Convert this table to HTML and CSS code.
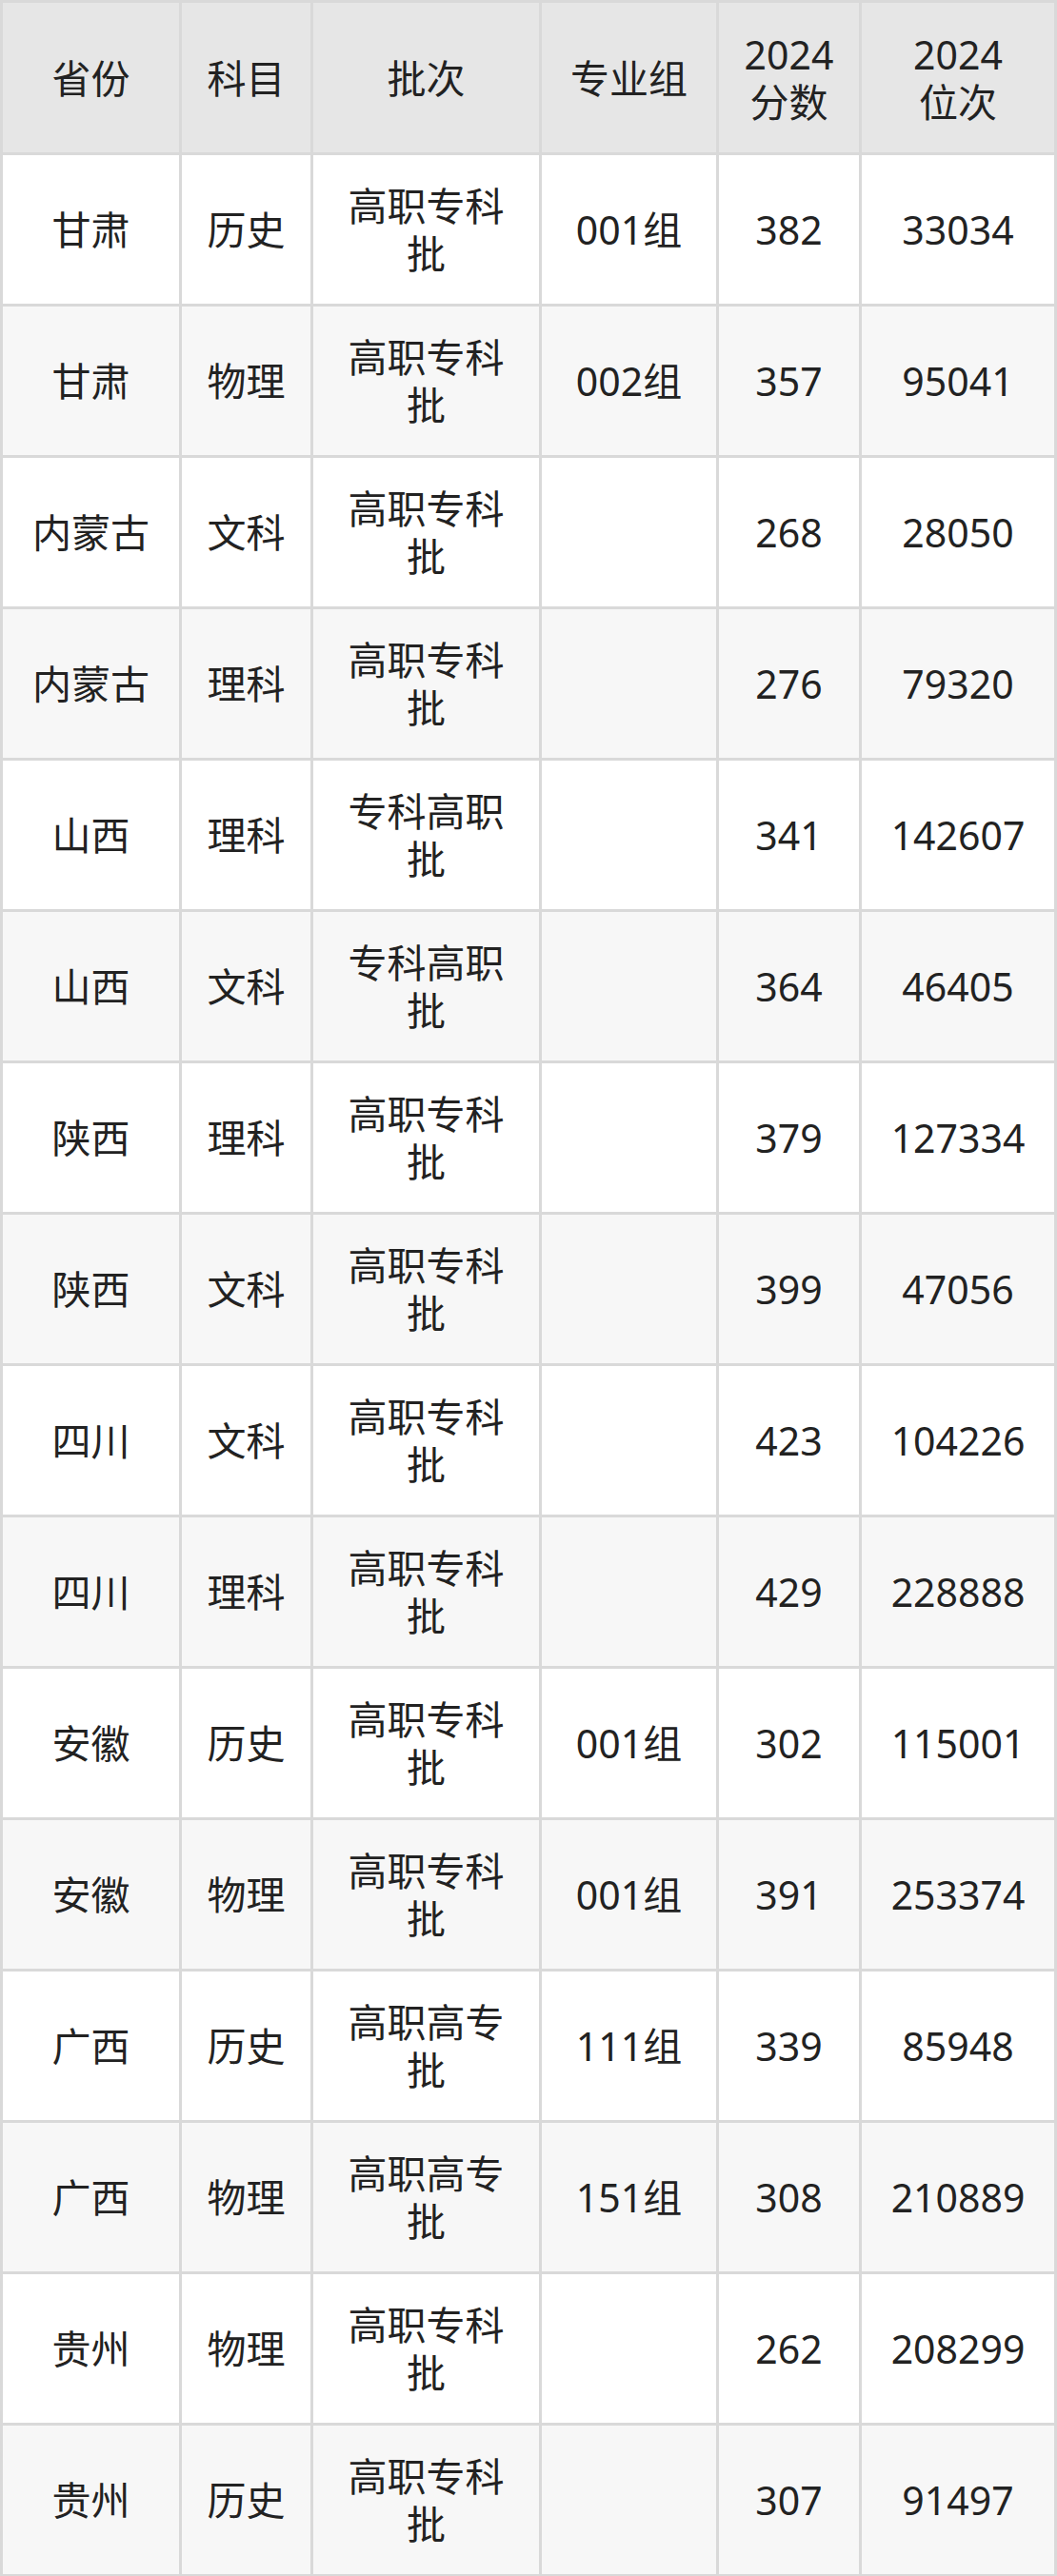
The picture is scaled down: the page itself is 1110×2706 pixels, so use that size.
FILE: index.html
```html
<!DOCTYPE html>
<html lang="zh-CN">
<head>
<meta charset="utf-8">
<title>2024 分数位次</title>
<link rel="stylesheet" href="styles.css">
</head>
<body>
<table class="score-table">
  <colgroup>
    <col class="c-prov">
    <col class="c-subj">
    <col class="c-batch">
    <col class="c-group">
    <col class="c-score">
    <col class="c-rank">
  </colgroup>
  <thead>
    <tr>
      <th>省份</th>
      <th>科目</th>
      <th>批次</th>
      <th>专业组</th>
      <th>2024<br>分数</th>
      <th>2024<br>位次</th>
    </tr>
  </thead>
  <tbody>
    <tr><td>甘肃</td><td>历史</td><td>高职专科批</td><td>001组</td><td>382</td><td>33034</td></tr>
    <tr><td>甘肃</td><td>物理</td><td>高职专科批</td><td>002组</td><td>357</td><td>95041</td></tr>
    <tr><td>内蒙古</td><td>文科</td><td>高职专科批</td><td></td><td>268</td><td>28050</td></tr>
    <tr><td>内蒙古</td><td>理科</td><td>高职专科批</td><td></td><td>276</td><td>79320</td></tr>
    <tr><td>山西</td><td>理科</td><td>专科高职批</td><td></td><td>341</td><td>142607</td></tr>
    <tr><td>山西</td><td>文科</td><td>专科高职批</td><td></td><td>364</td><td>46405</td></tr>
    <tr><td>陕西</td><td>理科</td><td>高职专科批</td><td></td><td>379</td><td>127334</td></tr>
    <tr><td>陕西</td><td>文科</td><td>高职专科批</td><td></td><td>399</td><td>47056</td></tr>
    <tr><td>四川</td><td>文科</td><td>高职专科批</td><td></td><td>423</td><td>104226</td></tr>
    <tr><td>四川</td><td>理科</td><td>高职专科批</td><td></td><td>429</td><td>228888</td></tr>
    <tr><td>安徽</td><td>历史</td><td>高职专科批</td><td>001组</td><td>302</td><td>115001</td></tr>
    <tr><td>安徽</td><td>物理</td><td>高职专科批</td><td>001组</td><td>391</td><td>253374</td></tr>
    <tr><td>广西</td><td>历史</td><td>高职高专批</td><td>111组</td><td>339</td><td>85948</td></tr>
    <tr><td>广西</td><td>物理</td><td>高职高专批</td><td>151组</td><td>308</td><td>210889</td></tr>
    <tr><td>贵州</td><td>物理</td><td>高职专科批</td><td></td><td>262</td><td>208299</td></tr>
    <tr><td>贵州</td><td>历史</td><td>高职专科批</td><td></td><td>307</td><td>91497</td></tr>
  </tbody>
</table>
</body>
</html>
```

FILE: styles.css
```css
html, body {
  margin: 0;
  padding: 0;
  background: #ffffff;
}

.score-table {
  width: 1110px;
  table-layout: fixed;
  border-collapse: collapse;
  font-family: "Noto Sans", "Noto Sans CJK SC", sans-serif;
  font-size: 41px;
  line-height: 50px;
  color: #222222;
}

.c-prov { width: 188px; }
.c-subj { width: 138px; }
.c-batch { width: 240px; }
.c-group { width: 186px; }
.c-score { width: 150px; }
.c-rank { width: 205px; }

.score-table th,
.score-table td {
  border: 3px solid #d9d9d9;
  padding: 0 17px;
  text-align: center;
  vertical-align: middle;
  font-weight: 400;
}

.score-table thead tr {
  height: 160px;
  background: #e6e6e6;
}

.score-table tbody tr {
  height: 159px;
  background: #ffffff;
}

.score-table tbody tr:nth-child(even) {
  background: #f7f7f7;
}
```
